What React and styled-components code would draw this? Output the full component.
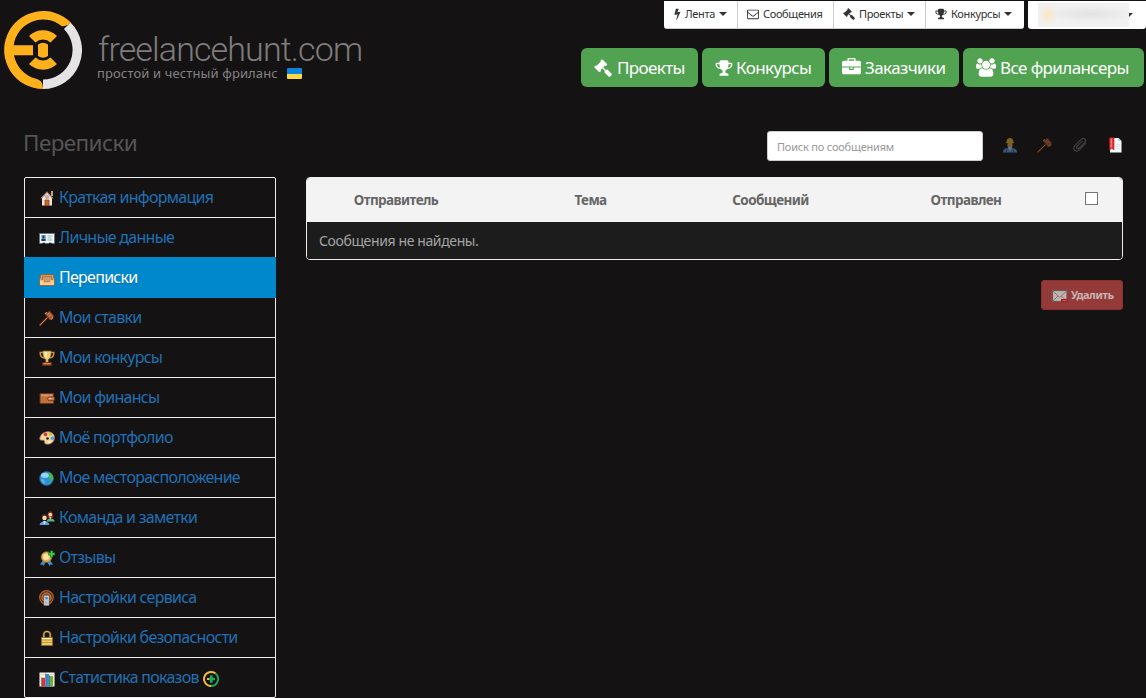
import React from "react";
import styled, { createGlobalStyle, css } from "styled-components";

const Global = createGlobalStyle`
  *, *::before, *::after { box-sizing: border-box; }
  html, body { margin: 0; background: #141213; overflow: hidden; }
  body { font-family: "Noto Sans", "Open Sans", sans-serif; color: #999; }
`;

/* ---------- glyph icons ---------- */

const Glyph = styled.svg`
  display: block;
  flex: none;
  width: ${(p) => p.$w || p.$s}px;
  height: ${(p) => p.$s}px;
  fill: currentColor;
`;

const GLYPHS = {
  bolt: "M1333 566q18 20 7 44l-540 1157q-13 25-42 25-4 0-14-2-17-5-25.5-19t-4.5-30l197-808-406 101q-4 1-12 1-18 0-31-11-18-15-13-39l201-825q4-14 16-23t28-9h328q19 0 32 12.5t13 29.5q0 8-5 18l-171 463 396-98q8-2 12-2 19 0 34 15z",
  envelope:
    "M1664 1504v-768q-32 36-69 66-268 206-426 338-51 43-83 67t-86.500 48.500-102.500 24.500h-2q-48 0-102.500-24.500t-86.500-48.500-83-67q-158-132-426-338-37-30-69-66v768q0 13 9.500 22.500t22.500 9.500h1472q13 0 22.500-9.500t9.500-22.500zm0-1051v-24.500l-.5-13-3-12.500-5.500-9-9-7.500-14-2.500h-1472q-13 0-22.500 9.500t-9.500 22.500q0 168 147 284 193 152 401 317 6 5 35 29.500t46 37.500 44.500 31.500 50.500 27.500 43 9h2q20 0 43-9t50.500-27.500 44.500-31.500 46-37.500 35-29.500q208-165 401-317 54-43 100.500-115.500t46.500-131.500zm128-37v1088q0 66-47 113t-113 47h-1472q-66 0-113-47t-47-113v-1088q0-66 47-113t113-47h1472q66 0 113 47t47 113z",
  gavel:
    "M1771 1536q0 53-37 90l-107 108q-39 37-91 37-53 0-90-37l-363-364q-38-36-38-90 0-53 43-96l-256-256-126 126q-14 14-34 14t-34-14q2 2 12.500 12t12.500 13 10 11.500 10 13.500 6 13.500 5.500 16.500 1.500 18q0 38-28 68-3 3-16.500 18t-19 20.500-18.500 16.500-22 15.500-22 9-26 4.500q-40 0-68-28l-408-408q-28-28-28-68 0-13 4.500-26t9-22 15.500-22 16.500-18.500 20.500-19 18-16.500q30-28 68-28 10 0 18 1.500t16.500 5.500 13.500 6 13.500 10 11.500 10 13 12.500 12 12.500q-14-14-14-34t14-34l348-348q14-14 34-14t34 14q-2-2-12.500-12t-12.500-13-10-11.500-10-13.500-6-13.500-5.500-16.500-1.500-18q0-38 28-68 3-3 16.500-18t19-20.500 18.500-16.500 22-15.500 22-9 26-4.500q40 0 68 28l408 408q28 28 28 68 0 13-4.500 26t-9 22-15.500 22-16.500 18.500-20.500 19-18 16.500q-30 28-68 28-10 0-18-1.500t-16.500-5.500-13.500-6-13.500-10-11.500-10-13-12.500-12-12.500q14 14 14 34t-14 34l-126 126 256 256q43-43 96-43 52 0 91 37l363 363q37 39 37 91z",
  trophy:
    "M522 883q-74-162-74-371h-256v96q0 78 94.500 162t235.500 113zm1078-275v-96h-256q0 209-74 371 141-29 235.500-113t94.500-162zm128-128v128q0 71-41.500 143t-112 130-173 97.500-215.500 44.500q-42 54-95 95-38 34-52.500 72.500t-14.500 89.500q0 54 30.500 91t97.500 37q75 0 133.500 45.500t58.500 114.500v64q0 14-9 23t-23 9h-832q-14 0-23-9t-9-23v-64q0-69 58.500-114.500t133.500-45.500q67 0 97.500-37t30.500-91q0-51-14.500-89.500t-52.500-72.500q-53-41-95-95-113-5-215.500-44.500t-173-97.500-112-130-41.500-143v-128q0-40 28-68t68-28h288v-96q0-66 47-113t113-47h576q66 0 113 47t47 113v96h288q40 0 68 28t28 68z",
  briefcase:
    "M640 256h512v-128h-512v128zm1152 640v480q0 66-47 113t-113 47h-1472q-66 0-113-47t-47-113v-480h672v160q0 26 19 45t45 19h320q26 0 45-19t19-45v-160h672zm-768 0v128h-256v-128h256zm768-480v384h-1792v-384q0-66 47-113t113-47h352v-160q0-40 28-68t68-28h576q40 0 68 28t28 68v160h352q66 0 113 47t47 113z",
  users:
    "M593 896q-162 5-265 128h-134q-82 0-138-40.500t-56-118.500q0-353 124-353 6 0 43.500 21t97.500 42.500 119 21.500q67 0 133-23-5 37-5 66 0 139 81 256zm1071 637q0 120-73 189.500t-194 69.500h-874q-121 0-194-69.500t-73-189.500q0-53 3.500-103.500t14-109 26.500-108.500 43-97.500 62-81 85.500-53.500 111.500-20q10 0 43 21.500t73 48 107 48 135 21.500 135-21.500 107-48 73-48 43-21.500q61 0 111.500 20t85.500 53.500 62 81 43 97.500 26.500 108.500 14 109 3.500 103.500zm-1024-1277q0 106-75 181t-181 75-181-75-75-181 75-181 181-75 181 75 75 181zm704 384q0 159-112.500 271.500t-271.500 112.500-271.500-112.500-112.500-271.500 112.500-271.500 271.500-112.500 271.500 112.500 112.500 271.500zm576 225q0 78-56 118.500t-138 40.500h-134q-103-123-265-128 81-117 81-256 0-29-5-66 66 23 133 23 59 0 119-21.500t97.500-42.500 43.500-21q124 0 124 353zm-128-609q0 106-75 181t-181 75-181-75-75-181 75-181 181-75 181 75 75 181z",
};

const BOXES = { bolt: "440 0 920 1792", users: "0 0 1920 1792" };

const FaIcon = ({ name, size, width }) => (
  <Glyph $s={size} $w={width} viewBox={BOXES[name] || "0 0 1792 1792"}>
    <path d={GLYPHS[name]} />
  </Glyph>
);

/* ---------- small colour icons, 16×16 ---------- */

const Small = styled.svg`
  display: block;
  flex: none;
  width: 16px;
  height: 16px;
  opacity: ${(p) => (p.$dim ? 0.5 : 1)};
`;

const gavelArt = (
  <>
    <path d="M1 15 8.500 7.500" stroke="#6b2f14" strokeWidth="2.200" strokeLinecap="round" />
    <path d="M1.200 14.800 8.500 7.500" stroke="#d08a5c" strokeWidth="1" strokeLinecap="round" />
    <path d="M6.500 4.500 10.500 1 15 6 11 10z" fill="#a85a30" stroke="#6b2f14" strokeWidth="1" />
    <path d="M6 4 8 2.200M11.800 9.600 14.200 7.300" stroke="#d08a5c" strokeWidth="1.300" />
    <path d="M8.500 4.500 10.500 3M10 6.300 12.300 4.500" stroke="#dc9a6d" strokeWidth="1" />
  </>
);

const ART = {
  home: (
    <>
      <path d="M12 1h2v5h-2z" fill="#c9a087" />
      <path d="M3 7.500 8 2.500 13 7.500V15.500H3z" fill="#f3e3d6" />
      <path d="M1.800 8.800 8 2 14.200 8.800" fill="none" stroke="#6d4536" strokeWidth="1.200" />
      <path d="M2.600 8 8 2.600 13.400 8" fill="none" stroke="#fff4ea" strokeWidth=".8" />
      <path d="M6.500 5.500h3v3h-3z" fill="#8a7768" />
      <path d="M7.300 6.200h1.400v1.600H7.300z" fill="#e9f2f6" />
      <path d="M6 10h4v5.500H6z" fill="#c06a2a" stroke="#7c3c16" strokeWidth=".7" />
    </>
  ),
  card: (
    <>
      <path d="M.5 3.500h15v10H.5z" fill="#eef6f8" stroke="#5b6f76" strokeWidth=".8" />
      <path d="M2 5h5v6H2z" fill="#8fb6d2" />
      <path d="M3.500 5.500h2v3h-2zM2.500 9h4v2h-4z" fill="#253c5e" />
      <path d="M8.500 6h5M8.500 8h4M8.500 10h5" stroke="#9db4ba" strokeWidth="1" />
      <path d="M3.500 12.800h2.500v1.200H3.500zM10 12.800h2.500v1.200H10z" fill="#141213" />
    </>
  ),
  inbox: (
    <>
      <path d="M2 3.500h12L15.500 9v5.500H.5V9z" fill="#e7b47c" stroke="#94602f" strokeWidth=".9" />
      <path d="M3 4.500h10l1 4.500h-3v2H5V9H2z" fill="#b27a47" />
      <path d="M4 6h8v3h-1.500v1.500h-5V9H4z" fill="#cf9a66" />
      <path d="M1 9.800h3.600v2.200h6.800V9.800H15V14H1z" fill="#f6cf9d" />
    </>
  ),
  gavel: gavelArt,
  cup: (
    <>
      <path d="M4 2.500H1.200C1 6 2.500 7.500 5 8M12 2.500h2.800C15 6 13.500 7.500 11 8" fill="none" stroke="#c99a3c" strokeWidth="1.400" />
      <path d="M3.800 1h8.400c0 5-.8 7.500-3 8.500v3H6.800v-3C4.600 8.500 3.800 6 3.800 1z" fill="#edd07c" stroke="#8d5f1c" strokeWidth=".7" />
      <path d="M5.500 2h2v5.500C6 6.500 5.500 5 5.500 2z" fill="#fff3c2" />
      <path d="M3.500 12.500h9v3h-9z" fill="#a4532b" stroke="#642c12" strokeWidth=".7" />
      <path d="M4.500 13.200h7v.8h-7z" fill="#dc9a6d" />
    </>
  ),
  wallet: (
    <>
      <path d="M1 3.500h13.500v10H1z" fill="#bd7240" stroke="#6d3414" strokeWidth="1" />
      <path d="M2 4.500h11.500v1.800H2z" fill="#d99663" />
      <path d="M9.500 7h6v3.300h-6L8.300 8.700z" fill="#d08a58" stroke="#5f2c10" strokeWidth=".8" />
      <circle cx="11" cy="8.600" r=".8" fill="#f8dcb8" />
    </>
  ),
  palette: (
    <>
      <path d="M.7 8.500C1.500 4 5 1.800 9 1.800c4 0 6.500 2.500 6.500 6 0 4-3.500 6.500-7 6.500-2.500 0-3.500-1-3-2.500.3-1.300-1-1.500-2.300-1.500S.5 9.800.7 8.500z" fill="#f2d3a4" stroke="#9a6a3a" strokeWidth=".8" />
      <circle cx="6.500" cy="4.500" r="1.800" fill="#dd3136" />
      <circle cx="11.300" cy="4.200" r="1.600" fill="#b8c832" />
      <circle cx="13.400" cy="8.300" r="1.700" fill="#3f9fe0" />
      <circle cx="8.500" cy="8.500" r="1.300" fill="#2a1a10" />
      <circle cx="10.500" cy="12" r="1.300" fill="#fff0d0" />
    </>
  ),
  globe: (
    <>
      <circle cx="7.500" cy="8.500" r="6.900" fill="#2f8fd8" stroke="#1c629f" strokeWidth=".7" />
      <ellipse cx="6" cy="5.300" rx="4" ry="2.600" fill="#93d5f6" />
      <path d="M8.500 3c2-.5 4 .5 5.200 2.500.8 1.500.8 3 .2 4.500L12 12l-.5-3-2-1.500.5-2z" fill="#48b548" />
      <path d="M2 8.500l3 1.500 1.500 2-1.500 2C3.200 13 2 11 2 8.500z" fill="#52b5dd" />
      <path d="M9 13.500l2.500-1-1 2z" fill="#48b548" />
    </>
  ),
  team: (
    <>
      <path d="M8.500 5c0-5 5.500-5 5.500 0l.3 3.300H8.300z" fill="#7d2c1c" />
      <circle cx="11.300" cy="4.700" r="1.900" fill="#f3cfa6" />
      <path d="M7.500 11.500c.5-4 7.500-4 8.300 0z" fill="#5cb57e" />
      <path d="M10.300 7h2l-1 2.500z" fill="#f3e6d8" />
      <path d="M2.800 7.500C2.500 3 8.500 3 8.200 7.500z" fill="#59341a" />
      <circle cx="5.500" cy="8" r="2.200" fill="#f8d9b4" />
      <path d="M.6 15c.4-5 9.300-5 9.800 0z" fill="#5d9fe0" />
      <path d="M4 11.200h3L5.500 14.500z" fill="#f5f8fc" />
    </>
  ),
  award: (
    <>
      <path d="M4.500 9.500.8 14.800l2.500-.2 1 1.400 3-4.500zM10.500 9.500l3.700 5.300-2.500-.2-1 1.400-3-4.500z" fill="#3f8fd0" />
      <circle cx="7.500" cy="7" r="5.300" fill="#dcb04f" stroke="#94701f" strokeWidth=".7" />
      <circle cx="7.200" cy="6.700" r="3.300" fill="#f6e2a0" />
      <path d="M12.700.6v6.800M9.300 4h6.700" stroke="#126f1d" strokeWidth="2.800" />
      <path d="M12.700 1v6M9.700 4h6" stroke="#3fd64c" strokeWidth="1.500" />
    </>
  ),
  phone: (
    <>
      <circle cx="7.500" cy="7.500" r="6.800" fill="#5b2f12" stroke="#b3622c" strokeWidth="1.200" />
      <circle cx="7.500" cy="7.500" r="4.600" fill="#8a4a1f" stroke="#e08a45" strokeWidth=".9" />
      <path d="M5 5.500h5v10H5z" fill="#dde2e6" stroke="#70767c" strokeWidth=".6" />
      <path d="M6.200 6.800h2.600v2.700H6.200z" fill="#3b8fd6" />
      <path d="M6 11h3.200M6 12.500h3.200M6 14h3.200" stroke="#858c93" strokeWidth=".8" strokeDasharray=".8 .4" />
    </>
  ),
  lock: (
    <>
      <path d="M4.800 8V4.500c0-4 6.400-4 6.400 0V8" fill="none" stroke="#7b5a1c" strokeWidth="2.200" />
      <path d="M4.800 8V4.500c0-4 6.400-4 6.400 0V8" fill="none" stroke="#e3c069" strokeWidth="1" />
      <path d="M2.500 7.500h11v8h-11z" fill="#edc96a" stroke="#8f6a22" strokeWidth=".8" />
      <path d="M3 10h10M3 12.500h10" stroke="#bf9338" strokeWidth=".9" />
      <path d="M3 8.500h10" stroke="#fbeeb6" strokeWidth="1" />
    </>
  ),
  chart: (
    <>
      <path d="M.5 1.500h15v14H.5z" fill="#f7f1e6" />
      <path d="M.5 3.500h15M.5 6.500h15M.5 9.500h15M.5 12.500h15" stroke="#d8ccb8" strokeWidth=".7" />
      <path d="M3 7h3v8.500H3z" fill="#e22f3a" />
      <path d="M7 3h3v12.500H7z" fill="#2d93d8" />
      <path d="M11 5h3v10.500h-3z" fill="#67b83a" />
      <path d="M2.700 6.500v9M6.700 2.500v13M10.500 4.500v11" stroke="#31414a" strokeWidth=".7" />
    </>
  ),
  worker: (
    <>
      <path d="M5.500 5h5v4c0 3-5 3-5 0z" fill="#dca46b" />
      <path d="M4.500 5c0-5.500 7-5.500 7 0l.8.900H3.700z" fill="#f0b024" />
      <path d="M1 15.500c0-4 3-4.500 7-4.500s7 .5 7 4.500z" fill="#5c9bdc" />
      <path d="M6 10.300h4l-2 3.400z" fill="#e3e6e0" />
      <path d="M4.500 12.500v3M11.500 12.500v3" stroke="#2e5d91" strokeWidth="1" />
    </>
  ),
  clip: (
    <path
      d="M13.800 6.200 7.600 12.600c-3.700 3.600-8-.6-4.500-4.200L9 2.400c3-2.700 6 .5 3.600 3.200L7.200 11c-1.700 1.600-3.400-.2-2-1.900l5-5"
      fill="none"
      stroke="#6a6a6a"
      strokeWidth="1.200"
      strokeLinecap="round"
    />
  ),
  bookmark: (
    <>
      <path d="M3 1h8.500l3 3v11.500H3z" fill="#f2fafa" />
      <path d="M11.500 1v3h3z" fill="#a9c9c9" />
      <path d="M2.500.8h4.500v12l-2.200-1.300-2.300 1.300z" fill="#e5343a" stroke="#a9141c" strokeWidth=".6" />
      <path d="M4.200 1.500v9" stroke="#ff9a97" strokeWidth=".9" />
      <path d="M9 7.500h4M9 9.500h4M9 11.500h4" stroke="#d5e3e3" strokeWidth=".8" />
    </>
  ),
  mail: (
    <>
      <path d="M.6 2.600h14.300v10.800H.6z" fill="#dff2ee" stroke="#4d6f69" strokeWidth="1" />
      <path d="M1 3l6.700 6.500L14.500 3M1 13l5-5M14.500 13l-5-5" fill="none" stroke="#6d908a" strokeWidth=".9" />
      <path d="M9 11h7v3H9z" fill="#9e0b14" />
      <path d="M10 12h5v1h-5z" fill="#ff5a5a" />
    </>
  ),
};

const ColorIcon = ({ name, dim }) => (
  <Small viewBox="0 0 16 16" $dim={dim} fill="none">
    {ART[name]}
  </Small>
);

/* ---------- header ---------- */

const Page = styled.div`
  width: 1146px;
  height: 698px;
  overflow: hidden;
  background: #141213;
`;

const Header = styled.header`
  display: flex;
  justify-content: space-between;
  height: 120px;
  padding: 0 2px 0 4px;
`;

const Brand = styled.a`
  display: flex;
  padding-top: 11px;
  gap: 16px;
`;

const LogoMark = styled.svg`
  width: 78px;
  height: 78px;
`;

const BrandText = styled.div`
  display: flex;
  flex-direction: column;
  padding-top: 23px;
`;

const BrandName = styled.span`
  font: 350 34px/30px Roboto, sans-serif;
  letter-spacing: -0.88px;
  color: #7e7c7c;
`;

const Tagline = styled.span`
  display: flex;
  align-items: center;
  gap: 8px;
  margin-left: -1px;
  font-size: 13px;
  line-height: 18px;
  letter-spacing: 0.12px;
  color: #858383;
`;

const Flag = styled.i`
  width: 15px;
  height: 11px;
  border-radius: 1px;
  margin-left: 1px;
  background: linear-gradient(#0b84dc 55%, #ffd84d 55%);
`;

const HeaderRight = styled.div`
  display: flex;
  flex-direction: column;
  align-items: flex-end;
  gap: 19px;
`;

const TopNav = styled.nav`
  display: flex;
  height: 29px;
  margin-right: -2px;
  padding-top: 1px;
  gap: 4px;
`;

const TopGroup = styled.div`
  display: flex;
  background: #fff;
  border-bottom: 1px solid #ccc;
  border-radius: 0 0 3px 3px;
`;

const TopItem = styled.a`
  display: flex;
  align-items: center;
  width: ${(p) => p.$w}px;
  padding: 0 0 2px 10px;
  gap: 4px;
  font-size: 11px;
  letter-spacing: -0.33px;
  white-space: nowrap;
  color: #333;
  & + & { padding-left: 9px; border-left: 1px solid #ccc; }
`;

const Caret = styled.i`
  border: 4px solid transparent;
  border-top-color: #333;
  border-bottom: 0;
`;

const Account = styled.div`
  display: flex;
  align-items: center;
  width: 118px;
  padding-left: 10px;
  background: #fff;
  border-radius: 0 0 3px 3px;
  & > ${Caret} { margin: -1px 0 0 -4px; }
`;

const Redacted = styled.div`
  position: relative;
  width: 91px;
  height: 24px;
  background:
    radial-gradient(ellipse 9px 11px at 10px 12px, #fbe6c4, rgba(251, 230, 196, 0) 100%),
    radial-gradient(ellipse 46px 8px at 52px 11px, #e2e2e2, rgba(226, 226, 226, 0) 100%),
    #f1f1f1;
  z-index: 1;
`;

const ActionBar = styled.nav`
  display: flex;
  gap: 4px;
`;

const ActionButton = styled.a`
  display: flex;
  align-items: center;
  width: ${(p) => p.$w}px;
  height: 39px;
  padding-left: ${(p) => p.$pad || 13}px;
  gap: ${(p) => p.$gap || 4}px;
  border-radius: 6px;
  background: #51a351;
  color: #fff;
  font-size: 17px;
  letter-spacing: -0.6px;
  white-space: nowrap;
`;

/* ---------- body ---------- */

const TitleRow = styled.div`
  display: flex;
  align-items: center;
  height: 57px;
  padding: 0 23px 5px 24px;
`;

const Title = styled.h1`
  flex: 1;
  margin: 0 0 7px -1px;
  font-size: 22.5px;
  font-weight: 400;
  line-height: 34px;
  letter-spacing: -0.6px;
  color: #555;
`;

const Search = styled.input`
  width: 216px;
  height: 30px;
  margin-right: 19px;
  padding: 0 9px;
  border: 1px solid #ccc;
  border-radius: 3px;
  background: #fff;
  font: 11px "Noto Sans", sans-serif;
  letter-spacing: -0.2px;
  color: #555;
  outline: none;
  &::placeholder { color: #999; opacity: 1; }
`;

const Filters = styled.div`
  display: flex;
  gap: 19px;
  width: 121px;
  margin-bottom: 3px;
`;

const Content = styled.div`
  display: flex;
  align-items: flex-start;
  gap: 30px;
  padding-left: 24px;
`;

const Sidebar = styled.ul`
  width: 252px;
  margin: 0;
  padding: 0;
  list-style: none;
  border: 1px solid #eee;
  border-radius: 2px;
`;

const SideItem = styled.li`
  display: flex;
  align-items: center;
  height: 40px;
  padding: 0 14px 2px 14px;
  gap: 4px;
  border-bottom: 1px solid #eee;
  font-size: 16px;
  letter-spacing: -0.73px;
  white-space: nowrap;
  color: #2070b4;
  &:last-child { height: 39px; padding-bottom: 1px; border-bottom: 0; }
  & > ${Small} { margin-top: 3px; }
  ${(p) =>
    p.$active &&
    css`
      height: 41px;
      margin: -1px -1px 0;
      padding-left: 15px;
      padding-bottom: 0;
      background: #0088cc;
      border-bottom-color: #0088cc;
      color: #fff;
      text-shadow: 0 1px 1px rgba(0, 0, 0, 0.2);
    `}
`;

const PlusBadge = styled.svg`
  width: 16px;
  height: 16px;
  margin: 3px 0 0;
`;

const Main = styled.main`
  display: flex;
  flex-direction: column;
  align-items: flex-end;
  gap: 20px;
  width: 817px;
`;

const Table = styled.div`
  width: 100%;
  border: 1px solid #eee;
  border-radius: 4px;
  overflow: hidden;
`;

const HeadRow = styled.div`
  display: grid;
  grid-template-columns: 178px 211px 149px 242px 1fr;
  align-items: center;
  height: 44px;
  background: #f3f3f3;
`;

const HeadCell = styled.div`
  font-size: 13.5px;
  font-weight: 700;
  letter-spacing: -0.57px;
  text-align: center;
  white-space: nowrap;
  color: #666;
`;

const Check = styled.span`
  width: 13px;
  height: 13px;
  margin: 0 0 3px -2px;
  border: 1px solid #767676;
  background: #fff;
`;

const EmptyRow = styled.div`
  height: 37px;
  padding-left: 12px;
  background: #1c1c1c;
  font-size: 14px;
  line-height: 37px;
  letter-spacing: -0.38px;
  color: #a3a3a3;
`;

const DeleteButton = styled.button`
  display: flex;
  align-items: center;
  width: 82px;
  height: 30px;
  padding: 0 0 1px 10px;
  gap: 3px;
  border: 1px solid #8a302e;
  border-radius: 3px;
  background: #943a38;
  font: 700 11px "Noto Sans", sans-serif;
  letter-spacing: -0.5px;
  color: #c8b3b3;
  & > ${Small} { margin-top: 3px; opacity: 0.65; }
`;

const TOP = [
  { icon: "bolt", iw: 7, text: "Лента", w: 73, caret: true },
  { icon: "envelope", text: "Сообщения", w: 96 },
  { icon: "gavel", text: "Проекты", w: 92, caret: true },
  { icon: "trophy", text: "Конкурсы", w: 99, caret: true },
];

const ACTIONS = [
  { icon: "gavel", text: "Проекты", w: 117, s: 18, gap: 5 },
  { icon: "trophy", text: "Конкурсы", w: 123, s: 18, gap: 3 },
  { icon: "briefcase", text: "Заказчики", w: 130, s: 19 },
  { icon: "users", text: "Все фрилансеры", w: 181, s: 19, iw: 20 },
];

const MENU = [
  ["home", "Краткая информация"],
  ["card", "Личные данные"],
  ["inbox", "Переписки"],
  ["gavel", "Мои ставки"],
  ["cup", "Мои конкурсы"],
  ["wallet", "Мои финансы"],
  ["palette", "Моё портфолио"],
  ["globe", "Мое месторасположение"],
  ["team", "Команда и заметки"],
  ["award", "Отзывы"],
  ["phone", "Настройки сервиса"],
  ["lock", "Настройки безопасности"],
  ["chart", "Статистика показов"],
];

const Logo = () => (
  <LogoMark viewBox="0 0 78 78">
    <path d="M63.250 14.750A34.300 34.300 0 0 1 39 73.300" fill="none" stroke="#e4e4e4" strokeWidth="9.400" />
    <path
      d="M39 78C39 71 36.500 69 32 67.700A29.600 29.600 0 0 1 10 44.300H29V34.300H9.700A29.600 29.600 0 0 1 57.500 15Q62 16 67.300 12A39 39 0 1 0 39 78z"
      fill="#ffb11b"
    />
    <path d="M25 25A20 20 0 0 1 53 25L46.500 31.500A11 11 0 0 0 31.500 31.500z" fill="#ffb11b" />
    <path d="M25 53A20 20 0 0 0 53 53L46.500 46.500A11 11 0 0 1 31.500 46.500z" fill="#ffb11b" />
    <path d="M34 33.500Q39 30 44 33.500V45Q39 48.500 34 45z" fill="#ffb11b" />
  </LogoMark>
);

export default function App() {
  return (
    <Page>
      <Global />
      <Header>
        <Brand>
          <Logo />
          <BrandText>
            <BrandName>freelancehunt.com</BrandName>
            <Tagline>
              простой и честный фриланс
              <Flag />
            </Tagline>
          </BrandText>
        </Brand>
        <HeaderRight>
          <TopNav>
            <TopGroup>
              {TOP.map((t) => (
                <TopItem key={t.text} $w={t.w}>
                  <FaIcon name={t.icon} size={12} width={t.iw} />
                  {t.text}
                  {t.caret && <Caret />}
                </TopItem>
              ))}
            </TopGroup>
            <Account>
              <Redacted />
              <Caret />
            </Account>
          </TopNav>
          <ActionBar>
            {ACTIONS.map((a) => (
              <ActionButton key={a.text} $w={a.w} $gap={a.gap}>
                <FaIcon name={a.icon} size={a.s} width={a.iw} />
                {a.text}
              </ActionButton>
            ))}
          </ActionBar>
        </HeaderRight>
      </Header>

      <TitleRow>
        <Title>Переписки</Title>
        <Search placeholder="Поиск по сообщениям" />
        <Filters>
          <ColorIcon name="worker" dim />
          <ColorIcon name="gavel" dim />
          <ColorIcon name="clip" dim />
          <ColorIcon name="bookmark" />
        </Filters>
      </TitleRow>

      <Content>
        <Sidebar>
          {MENU.map(([icon, text], i) => (
            <SideItem key={icon} $active={i === 2}>
              <ColorIcon name={icon} />
              {text}
              {icon === "chart" && (
                <PlusBadge viewBox="0 0 16 16">
                  <path d="M8 15A7 7 0 1 1 12.500 2.600" fill="none" stroke="#f0b93a" strokeWidth="2" />
                  <path d="M12.500 2.600A7 7 0 0 1 8 15" fill="none" stroke="#1fa055" strokeWidth="2" />
                  <path d="M8.300 4.300v7.400M5.500 8h6.500" stroke="#22a95a" strokeWidth="2.600" />
                  <path d="M4 8h2" stroke="#f0b93a" strokeWidth="2" />
                </PlusBadge>
              )}
            </SideItem>
          ))}
        </Sidebar>
        <Main>
          <Table>
            <HeadRow>
              <HeadCell>Отправитель</HeadCell>
              <HeadCell>Тема</HeadCell>
              <HeadCell>Сообщений</HeadCell>
              <HeadCell>Отправлен</HeadCell>
              <Check />
            </HeadRow>
            <EmptyRow>Сообщения не найдены.</EmptyRow>
          </Table>
          <DeleteButton>
            <ColorIcon name="mail" />
            Удалить
          </DeleteButton>
        </Main>
      </Content>
    </Page>
  );
}
